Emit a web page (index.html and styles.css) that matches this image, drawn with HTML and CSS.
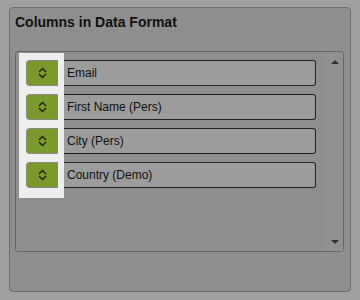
FILE: index.html
```html
<!doctype html>
<html lang="en">
<head>
    <meta charset="utf-8">
    <title>Columns in Data Format</title>
    <link rel="stylesheet" href="styles.css">
</head>
<body>
    <div class="panel">
        <h2 class="panel-title">Columns in Data Format</h2>
        <div class="list-box">
            <div class="list">
                <div class="handles">
                    <div class="handle"><svg width="9" height="12" viewBox="0 0 9 12"><path d="M1 5 L4.5 1.5 L8 5 M1 7 L4.5 10.5 L8 7" fill="none" stroke="#1e1e1e" stroke-width="1.4"/></svg></div>
                    <div class="handle"><svg width="9" height="12" viewBox="0 0 9 12"><path d="M1 5 L4.5 1.5 L8 5 M1 7 L4.5 10.5 L8 7" fill="none" stroke="#1e1e1e" stroke-width="1.4"/></svg></div>
                    <div class="handle"><svg width="9" height="12" viewBox="0 0 9 12"><path d="M1 5 L4.5 1.5 L8 5 M1 7 L4.5 10.5 L8 7" fill="none" stroke="#1e1e1e" stroke-width="1.4"/></svg></div>
                    <div class="handle"><svg width="9" height="12" viewBox="0 0 9 12"><path d="M1 5 L4.5 1.5 L8 5 M1 7 L4.5 10.5 L8 7" fill="none" stroke="#1e1e1e" stroke-width="1.4"/></svg></div>
                </div>
                <div class="fields">
                    <div class="field">Email</div>
                    <div class="field">First Name (Pers)</div>
                    <div class="field">City (Pers)</div>
                    <div class="field">Country (Demo)</div>
                </div>
            </div>
            <div class="scrollbar">
                <span class="arrow arrow-up"></span>
                <span class="arrow arrow-down"></span>
            </div>
        </div>
    </div>
</body>
</html>
```

FILE: styles.css
```css
* {
    box-sizing: border-box;
}
html {
    background-color: #a0a0a0;
}
body {
    margin: 0;
    padding: 7px 9px 8px 9px;
    font-family: "Liberation Sans", Arial, sans-serif;
}
.panel {
    height: 285px;
    background-color: #8e8e8e;
    border: 1px solid #6c6c6c;
    border-radius: 4px;
    padding: 5px 6px 0 5px;
}
.panel-title {
    margin: 0;
    height: 38px;
    font-size: 14px;
    font-weight: bold;
    line-height: 19px;
    color: #111;
}
.list-box {
    display: flex;
    width: 329px;
    height: 201px;
    border: 1px solid #676767;
    border-radius: 3px;
    padding: 1px 0 0 3px;
}
.list {
    flex: 1;
    display: flex;
    align-items: flex-start;
}
.handles {
    display: flex;
    flex-direction: column;
    gap: 8px;
    width: 45px;
    padding: 7px 6px 10px 7px;
    background-color: #eeeeee;
}
.handle {
    display: flex;
    align-items: center;
    justify-content: center;
    height: 26px;
    background-color: #7b9a2b;
    border: 1px solid #8a8a8a;
    border-right: none;
    border-radius: 4px 0 0 4px;
}
.fields {
    display: flex;
    flex-direction: column;
    gap: 8px;
    width: 252px;
    padding-top: 7px;
}
.field {
    height: 26px;
    background-color: #9c9c9c;
    border: 1px solid #222;
    border-left: none;
    border-radius: 0 3px 3px 0;
    padding-left: 3px;
    font-size: 12px;
    line-height: 24px;
    color: #111;
}
.scrollbar {
    width: 17px;
    display: flex;
    flex-direction: column;
    justify-content: space-between;
    align-items: center;
    padding: 7px 0 7px 0;
    background-color: #919191;
}
.arrow {
    width: 0;
    height: 0;
    border-left: 4px solid transparent;
    border-right: 4px solid transparent;
}
.arrow-up {
    border-bottom: 4px solid #333;
}
.arrow-down {
    border-top: 4px solid #333;
}
```
